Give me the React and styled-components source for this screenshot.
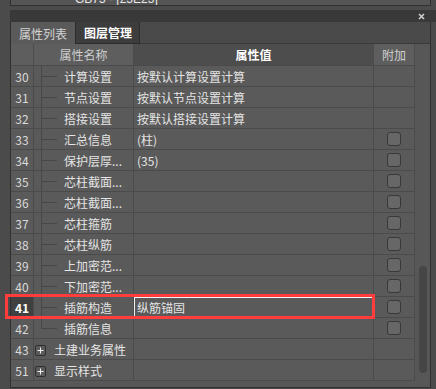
import React from 'react';
import styled, { createGlobalStyle } from 'styled-components';

const GlobalStyle = createGlobalStyle`
  html, body { margin: 0; padding: 0; background: #4b4b4b; }
  body { font-family: "Noto Sans CJK SC", "Noto Sans", sans-serif; }
  * { box-sizing: border-box; }
`;

const Page = styled.div`
  position: relative;
  width: 436px;
  height: 389px;
  overflow: hidden;
  background: #4b4b4b;
  display: flex;
  flex-direction: column;
  padding-left: 10px;
`;

const TopStrip = styled.div`
  width: 421px;
  height: 6px;
  border: 1px solid #303030;
  border-top: none;
  background: #555555;
  overflow: hidden;
  display: flex;
  align-items: flex-end;
`;

const ClippedLabel = styled.span`
  margin-left: 64px;
  font: 12px/12px "Liberation Sans", Arial, sans-serif;
  color: #e8e8e8;
  white-space: nowrap;
`;

const TitleBar = styled.div`
  margin-top: 4px;
  height: 12px;
  width: 426px;
  background: #393939;
  display: flex;
  align-items: center;
  justify-content: flex-end;
  padding-right: 11px;
`;

const Panel = styled.div`
  width: 421px;
  border: 1px solid #303030;
  border-top: none;
  display: flex;
  flex-direction: column;
`;

const TabStrip = styled.div`
  height: 22px;
  display: flex;
  background: #4a4a4a;
`;

const Tab = styled.div`
  width: ${p => p.$w}px;
  height: 22px;
  display: flex;
  align-items: center;
  padding-left: 8px;
  font-size: 12px;
  background: ${p => (p.$active ? '#5a5a5a' : '#3d3d3d')};
  color: ${p => (p.$active ? '#d4d4d4' : '#ffffff')};
  font-weight: ${p => (p.$active ? 400 : 700)};
  border: ${p => (p.$active ? 'none' : '1px solid #2c2c2c')};
  border-top: none;
`;

const TabFiller = styled.div`
  flex: 1;
  border-bottom: 1px solid #3a3a3a;
`;

const TableArea = styled.div`
  display: flex;
  height: 343px;
`;

const Grid = styled.div`
  width: 404px;
  background: #585858;
  display: flex;
  flex-direction: column;
`;

const HeaderRow = styled.div`
  display: flex;
  height: 22px;
  border-bottom: 1px solid #4a4a4a;
`;

const HeadCell = styled.div`
  width: ${p => p.$w}px;
  display: flex;
  align-items: center;
  justify-content: center;
  font-size: 12px;
  background: ${p => (p.$strong ? '#4d4d4d' : '#5e5e5e')};
  color: ${p => (p.$strong ? '#ffffff' : '#cfcfcf')};
  font-weight: ${p => (p.$strong ? 700 : 400)};
  border-right: 1px solid #4c4c4c;
`;

const Row = styled.div`
  display: flex;
  height: 21px;
  border-bottom: 1px solid #4b4b4b;
  background: #5a5a5a;
`;

const NumCell = styled.div`
  width: 23px;
  display: flex;
  align-items: center;
  justify-content: center;
  font-size: 12px;
  border-right: 1px solid #4b4b4b;
  background: ${p => (p.$active ? '#404040' : '#5a5a5a')};
  color: ${p => (p.$active ? '#ffffff' : '#dadada')};
  font-weight: ${p => (p.$active ? 700 : 400)};
`;

const NameCell = styled.div`
  width: 100px;
  display: flex;
  align-items: center;
  font-size: 12px;
  color: #e4e4e4;
  border-right: 1px solid #4b4b4b;
  white-space: nowrap;
  overflow: hidden;
`;

const GroupLabel = styled.span`
  margin-left: 8px;
`;

const PlusBox = styled.div`
  width: 11px;
  height: 11px;
  margin-left: 1px;
  margin-top: 2px;
  border: 1px solid #2e2e2e;
  border-radius: 2px;
  background: #5c5c5c;
  display: flex;
  align-items: center;
  justify-content: center;
`;

const ValueCell = styled.div`
  width: 240px;
  display: flex;
  align-items: center;
  padding-left: 3px;
  font-size: 12px;
  color: #e4e4e4;
  border-right: 1px solid #4b4b4b;
  box-shadow: ${p => (p.$editing ? 'inset 0 0 0 1px #f2f2f2' : 'none')};
`;

const AttachCell = styled.div`
  width: 41px;
  display: flex;
  align-items: center;
  justify-content: center;
  border-right: 1px solid #4b4b4b;
`;

const Check = styled.div`
  width: 14px;
  height: 14px;
  border: 1px solid #383838;
  border-radius: 3px;
  background: #676767;
`;

const BottomStrip = styled.div`
  flex: 1;
  background: #585858;
`;

const ScrollCol = styled.div`
  width: 15px;
  background: #575757;
  padding-left: 4px;
`;

const Thumb = styled.div`
  width: 8px;
  height: 107px;
  margin-top: 222px;
  border-radius: 4px;
  background: #464646;
`;

const Annotation = styled.div`
  position: absolute;
  left: 5px;
  top: 294px;
  width: 370px;
  height: 25px;
  border: 3px solid #ff3d3d;
  pointer-events: none;
`;

const Close = () => (
  <svg width="7" height="7" viewBox="0 0 7 7">
    <path d="M1 1 L6 6 M6 1 L1 6" stroke="#d0d0d0" strokeWidth="1.6" />
  </svg>
);

const TreeGuide = ({ last }) => (
  <svg width="30" height="20" viewBox="0 0 30 20">
    <path d={`M7.5 0 V${last ? 10.5 : 20} M7 10.5 H23`} stroke="#474747" strokeWidth="1" fill="none" />
  </svg>
);

const PlusIcon = () => (
  <svg width="7" height="7" viewBox="0 0 7 7">
    <path d="M3.5 0.5 V6.5 M0.5 3.5 H6.5" stroke="#f0f0f0" strokeWidth="1" />
  </svg>
);

const rows = [
  { n: 30, name: '计算设置', value: '按默认计算设置计算' },
  { n: 31, name: '节点设置', value: '按默认节点设置计算' },
  { n: 32, name: '搭接设置', value: '按默认搭接设置计算' },
  { n: 33, name: '汇总信息', value: '(柱)', check: true },
  { n: 34, name: '保护层厚...', value: '(35)', check: true },
  { n: 35, name: '芯柱截面...', value: '', check: true },
  { n: 36, name: '芯柱截面...', value: '', check: true },
  { n: 37, name: '芯柱箍筋', value: '', check: true },
  { n: 38, name: '芯柱纵筋', value: '', check: true },
  { n: 39, name: '上加密范...', value: '', check: true },
  { n: 40, name: '下加密范...', value: '', check: true },
  { n: 41, name: '插筋构造', value: '纵筋锚固', check: true, active: true },
  { n: 42, name: '插筋信息', value: '', check: true, last: true },
  { n: 43, name: '土建业务属性', group: true },
  { n: 51, name: '显示样式', group: true },
];

export default function App() {
  return (
    <>
      <GlobalStyle />
      <Page>
        <TopStrip>
          <ClippedLabel>GB75 - [25E25]</ClippedLabel>
        </TopStrip>
        <TitleBar>
          <Close />
        </TitleBar>
        <Panel>
          <TabStrip>
            <Tab $active $w={64}>属性列表</Tab>
            <Tab $w={65}>图层管理</Tab>
            <TabFiller />
          </TabStrip>
          <TableArea>
            <Grid>
              <HeaderRow>
                <HeadCell $w={23} />
                <HeadCell $w={100}>属性名称</HeadCell>
                <HeadCell $w={240} $strong>属性值</HeadCell>
                <HeadCell $w={41}>附加</HeadCell>
              </HeaderRow>
              {rows.map(r => (
                <Row key={r.n}>
                  <NumCell $active={r.active}>{r.n}</NumCell>
                  <NameCell>
                    {r.group ? (
                      <>
                        <PlusBox><PlusIcon /></PlusBox>
                        <GroupLabel>{r.name}</GroupLabel>
                      </>
                    ) : (
                      <>
                        <TreeGuide last={r.last} />
                        <span>{r.name}</span>
                      </>
                    )}
                  </NameCell>
                  <ValueCell $editing={r.active}>{r.value}</ValueCell>
                  <AttachCell>{r.check && <Check />}</AttachCell>
                </Row>
              ))}
              <BottomStrip />
            </Grid>
            <ScrollCol>
              <Thumb />
            </ScrollCol>
          </TableArea>
        </Panel>
        <Annotation />
      </Page>
    </>
  );
}
